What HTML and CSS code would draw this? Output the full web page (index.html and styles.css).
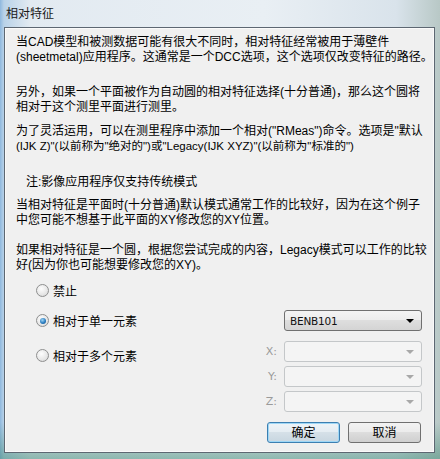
FILE: index.html
```html
<!DOCTYPE html>
<html lang="zh-CN">
<head>
<meta charset="utf-8">
<title>相对特征</title>
<link rel="stylesheet" href="styles.css">
</head>
<body>
<div class="frame">
  <div class="titlebar">相对特征</div>
  <div class="client">
    <p class="p1"><span class="ln">当CAD模型和被测数据可能有很大不同时，相对特征经常被用于薄壁件</span><span class="ln">(sheetmetal)应用程序。这通常是一个DCC选项，这个选项仅改变特征的路径。</span></p>
    <p class="p2"><span class="ln">另外，如果一个平面被作为自动圆的相对特征选择(十分普通)，那么这个圆将</span><span class="ln">相对于这个测里平面进行测里。</span></p>
    <p class="p3"><span class="ln">为了灵活运用，可以在测里程序中添加一个相对("RMeas")命令。选项是"默认</span><span class="ln sm">(IJK Z)"(以前称为"绝对的")或"Legacy(IJK XYZ)"(以前称为"标准的")</span></p>
    <p class="note"><span class="ln">注:影像应用程序仅支持传统模式</span></p>
    <p class="p4"><span class="ln">当相对特征是平面时(十分普通)默认模式通常工作的比较好，因为在这个例子</span><span class="ln">中您可能不想基于此平面的XY修改您的XY位置。</span></p>
    <p class="p5"><span class="ln">如果相对特征是一个圆，根据您尝试完成的内容，Legacy模式可以工作的比较</span><span class="ln">好(因为你也可能想要修改您的XY)。</span></p>

    <div class="options">
      <div class="row r1">
        <label class="radio"><span class="dot"></span>禁止</label>
      </div>
      <div class="row r2">
        <label class="radio"><span class="dot on"></span>相对于单一元素</label>
        <div class="combo active"><span class="val">BENB101</span><span class="arrow"></span></div>
      </div>
      <div class="row r3">
        <label class="radio low"><span class="dot"></span>相对于多个元素</label>
        <span class="axis">X:</span>
        <div class="combo off"><span class="val"></span><span class="arrow"></span></div>
      </div>
      <div class="row r4">
        <span class="axis">Y:</span>
        <div class="combo off"><span class="val"></span><span class="arrow"></span></div>
      </div>
      <div class="row r5">
        <span class="axis">Z:</span>
        <div class="combo off"><span class="val"></span><span class="arrow"></span></div>
      </div>
      <div class="row buttons">
        <button class="btn default">确定</button>
        <button class="btn">取消</button>
      </div>
    </div>
  </div>
</div>
</body>
</html>
```

FILE: styles.css
```css
html, body {
  margin: 0;
  padding: 0;
}
body {
  width: 440px;
  height: 459px;
  overflow: hidden;
  font-family: "Liberation Sans", "Noto Sans CJK SC", sans-serif;
  font-size: 12px;
  color: #000;
}
.frame {
  width: 440px;
  height: 459px;
  box-sizing: border-box;
  padding: 0 0 0 4px;
  background:
    linear-gradient(180deg, rgba(255,255,255,0) 0%, rgba(255,255,255,0) 92%, rgba(70,140,120,0.55) 100%),
    linear-gradient(90deg, #8fb8de 0px, #b9d2e8 4px, #e2eaf1 30px, #e9eff4 60%, #d9e3eb 90%, #b8c8c6 100%);
}
.titlebar {
  height: 27px;
  box-sizing: border-box;
  padding-left: 2px;
  padding-bottom: 2px;
  line-height: 25px;
  font-size: 12px;
  color: #1a1a1a;
  font-family: "Noto Sans CJK SC", sans-serif;
}
.client {
  width: 431px;
  height: 426px;
  box-sizing: border-box;
  background: #f0f0f0;
  border: 1px solid #5d6772;
  box-shadow: inset 0 0 0 1px #fafafa;
  padding: 7px 12px 0 11px;
  display: flex;
  flex-direction: column;
}
.client p {
  margin: 0;
  white-space: nowrap;
}
.ln {
  display: block;
  height: 15px;
  line-height: 15px;
  overflow: visible;
}
.p1 { margin-bottom: 20px !important; }
.p2 { margin-bottom: 9px !important; }
.p3 { margin-bottom: 21px !important; }
.sm { font-size: 11.5px; }
.note { padding-left: 10px; margin-bottom: 8px !important; }
.p4 { margin-bottom: 15px !important; }

.options {
  display: flex;
  flex-direction: column;
  margin-top: 7px;
}
.row {
  display: flex;
  align-items: center;
  justify-content: flex-end;
  height: 21px;
}
.r1 { height: 20px; margin-bottom: 10px; }
.r2 { margin-bottom: 10px; }
.r3 { margin-bottom: 4px; }
.r4 { margin-bottom: 4px; }
.r5 { margin-bottom: 10px; }
.radio {
  display: flex;
  align-items: center;
  gap: 4px;
  margin-right: auto;
  margin-left: 20px;
  font-family: "Noto Sans CJK SC", sans-serif;
  font-size: 12px;
}
.radio.low { position: relative; top: 4px; }
.dot {
  width: 11px;
  height: 11px;
  border-radius: 50%;
  border: 1px solid #8e8f8f;
  background: radial-gradient(circle at 40% 35%, #fdfdfd 0%, #e6e6e6 60%, #cfcfcf 100%);
  position: relative;
}
.dot.on::after {
  content: "";
  position: absolute;
  left: 2.5px;
  top: 2.5px;
  width: 6px;
  height: 6px;
  border-radius: 50%;
  background: radial-gradient(circle at 40% 35%, #9fd6f5 0%, #2a7cc0 55%, #0d4d86 100%);
}
.axis {
  color: #9a9a9a;
  font-size: 11px;
  margin-right: 7px;
  font-family: "DejaVu Sans", sans-serif;
}
.combo {
  width: 138px;
  height: 21px;
  box-sizing: border-box;
  border-radius: 3px;
  display: flex;
  align-items: center;
  justify-content: space-between;
  padding: 0 5px;
}
.combo.active {
  border: 1px solid #707070;
  background: linear-gradient(180deg, #f4f4f4 0%, #ececec 49%, #dedede 50%, #d4d4d4 100%);
}
.combo.off {
  border: 1px solid #c4c7c9;
  background: #f4f4f4;
}
.val {
  font-family: "DejaVu Sans", sans-serif;
  font-size: 10.5px;
  color: #111;
  letter-spacing: -0.2px;
}
.arrow {
  width: 0;
  height: 0;
  border-left: 4px solid transparent;
  border-right: 4px solid transparent;
  border-top: 4px solid #000;
  margin-right: 2px;
}
.combo.off .arrow { border-top-color: #a8a8a8; }
.buttons {
  height: 20px;
  gap: 8px;
  padding-right: 1px;
}
.btn {
  width: 73px;
  height: 21px;
  box-sizing: border-box;
  border: 1px solid #707070;
  border-radius: 3px;
  background: linear-gradient(180deg, #f3f3f3 0%, #ebebeb 49%, #dddddd 50%, #cfcfcf 100%);
  font-family: "Noto Sans CJK SC", sans-serif;
  font-size: 12px;
  color: #000;
  padding: 0;
  line-height: 18px;
}
.btn.default {
  border-color: #3c7fb1;
  box-shadow: inset 0 0 0 1px #9ed7f6;
  background: linear-gradient(180deg, #eef4f8 0%, #e4ecf2 49%, #d5e0e8 50%, #c8d6e0 100%);
}
```
